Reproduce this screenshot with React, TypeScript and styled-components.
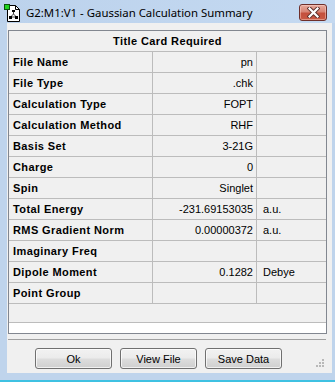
import React from 'react'
import styled, { createGlobalStyle } from 'styled-components'

const GlobalStyle = createGlobalStyle`
  html, body {
    margin: 0;
    padding: 0;
    background: #bfd4ec;
  }
  * {
    box-sizing: border-box;
  }
`

const Window = styled.div`
  width: 335px;
  height: 382px;
  display: flex;
  flex-direction: column;
  background: #bfd4ec;
  overflow: hidden;
  font-family: 'Liberation Sans', Arial, sans-serif;
  border-bottom: 2px solid #3fc1e2;
`

const TitleBar = styled.div`
  height: 23px;
  flex: 0 0 23px;
  display: flex;
  align-items: flex-start;
  padding: 4px 8px 0 4px;
  background: linear-gradient(to right, #bcd2ec, #c4d9f1);
`

const TitleText = styled.span`
  font-family: 'Noto Sans', 'Open Sans', sans-serif;
  font-size: 11.4px;
  line-height: 16px;
  color: #000;
  margin-left: 5px;
  margin-top: 1px;
  flex: 1;
`

const CloseButton = styled.div`
  width: 28px;
  height: 17px;
  border: 1px solid #6e2f2a;
  border-radius: 3px;
  background: linear-gradient(to bottom, #e7a99c 0%, #d88575 45%, #c4503d 55%, #c95a44 100%);
  box-shadow: inset 0 0 0 1px rgba(255, 220, 210, 0.45);
  display: flex;
  align-items: center;
  justify-content: center;
`

const Frame = styled.div`
  flex: 1;
  display: flex;
  padding: 0 3px 7px 7px;
`

const Client = styled.div`
  flex: 1;
  display: flex;
  flex-direction: column;
  background: #f0f0f0;
  padding: 7px 5px 0 1px;
`

const Grid = styled.div`
  border: 1px solid #828790;
  background: #ffffff;
  height: 304px;
  display: flex;
  flex-direction: column;
`

const GridBody = styled.div`
  background: #f0f0f0;
  border-bottom: 1px solid #bcbcbc;
  height: 292px;
`

const HeaderRow = styled.div`
  height: 21px;
  border-bottom: 1px solid #bcbcbc;
  display: flex;
  align-items: center;
  justify-content: center;
  font-weight: bold;
  font-size: 11px;
  letter-spacing: 0.4px;
  color: #000;
`

const Row = styled.div`
  height: 21px;
  display: grid;
  grid-template-columns: 144px 104px 1fr;
  border-bottom: 1px solid #bcbcbc;
  font-size: 11px;
  color: #000;
`

const Cell = styled.div<{ $align?: 'left' | 'right'; $bold?: boolean }>`
  display: flex;
  align-items: center;
  justify-content: ${(p) => (p.$align === 'right' ? 'flex-end' : 'flex-start')};
  padding: ${(p) => (p.$align === 'right' ? '0 3px 0 0' : p.$bold ? '0 0 0 4px' : '0 0 0 6px')};
  font-weight: ${(p) => (p.$bold ? 'bold' : 'normal')};
  letter-spacing: ${(p) => (p.$bold ? '0.4px' : '0')};
  border-right: 1px solid #bcbcbc;
  white-space: nowrap;

  &:last-child {
    border-right: none;
  }
`

const Separator = styled.div`
  margin-top: 5px;
  height: 1px;
  background: #a0a0a0;
  margin-right: 1px;
`

const ButtonRow = styled.div`
  display: flex;
  align-items: flex-start;
  gap: 8px;
  padding-left: 27px;
  margin-top: 8px;
  flex: 1;
`

const Button = styled.button`
  width: 77px;
  height: 21px;
  padding: 0;
  border: 1px solid #707070;
  border-radius: 3px;
  background: linear-gradient(to bottom, #f2f2f2 0%, #ebebeb 48%, #dddddd 52%, #cfcfcf 100%);
  box-shadow: inset 0 0 0 1px rgba(255, 255, 255, 0.7);
  font-family: 'Liberation Sans', Arial, sans-serif;
  font-size: 11px;
  color: #000;
`

const Grip = styled.svg`
  margin-left: auto;
  margin-top: 11px;
  margin-right: 2px;
`

type Item = { label: string; value: string; unit: string }

const rows: Item[] = [
  { label: 'File Name', value: 'pn', unit: '' },
  { label: 'File Type', value: '.chk', unit: '' },
  { label: 'Calculation Type', value: 'FOPT', unit: '' },
  { label: 'Calculation Method', value: 'RHF', unit: '' },
  { label: 'Basis Set', value: '3-21G', unit: '' },
  { label: 'Charge', value: '0', unit: '' },
  { label: 'Spin', value: 'Singlet', unit: '' },
  { label: 'Total Energy', value: '-231.69153035', unit: 'a.u.' },
  { label: 'RMS Gradient Norm', value: '0.00000372', unit: 'a.u.' },
  { label: 'Imaginary Freq', value: '', unit: '' },
  { label: 'Dipole Moment', value: '0.1282', unit: 'Debye' },
  { label: 'Point Group', value: '', unit: '' },
]

const AppIcon = () => (
  <svg width="17" height="18" viewBox="0 0 17 18">
    <path d="M3.5 1.5 H11.5 L15.5 5.5 V17.5 H3.5 Z" fill="#fff" stroke="#000" />
    <path d="M11.5 1.5 V5.5 H15.5" fill="none" stroke="#000" />
    <rect x="0.5" y="0.5" width="5" height="5" fill="#1fd41f" stroke="#0a500a" />
    <path d="M9.5 7 V10 M9.5 10 L6.5 13 M9.5 10 L12.5 13 M6.5 13 H12.5" stroke="#444" fill="none" />
    <rect x="8" y="6" width="3" height="2" fill="#000" />
    <rect x="5" y="12" width="3" height="3" fill="#000" />
    <rect x="11" y="12" width="3" height="3" fill="#000" />
  </svg>
)

const CloseGlyph = () => (
  <svg width="13" height="11" viewBox="0 0 13 11">
    <path d="M2.5 1.5 L10.5 9.5 M10.5 1.5 L2.5 9.5" stroke="#5a2e2a" strokeWidth="4" strokeLinecap="square" />
    <path d="M2.5 1.5 L10.5 9.5 M10.5 1.5 L2.5 9.5" stroke="#ffffff" strokeWidth="2.2" strokeLinecap="square" />
  </svg>
)

const SizeGrip = () => (
  <Grip width="9" height="9" viewBox="0 0 9 9">
    {[
      [6, 0],
      [3, 3],
      [6, 3],
      [0, 6],
      [3, 6],
      [6, 6],
    ].map(([x, y]) => (
      <rect key={`${x}-${y}`} x={x} y={y} width="2" height="2" fill="#b8b8b8" />
    ))}
  </Grip>
)

const App = () => {
  return (
    <>
      <GlobalStyle />
      <Window>
        <TitleBar>
          <AppIcon />
          <TitleText>G2:M1:V1 - Gaussian Calculation Summary</TitleText>
          <CloseButton>
            <CloseGlyph />
          </CloseButton>
        </TitleBar>
        <Frame>
          <Client>
            <Grid>
              <GridBody>
                <HeaderRow>Title Card Required</HeaderRow>
                {rows.map((r) => (
                  <Row key={r.label}>
                    <Cell $bold>{r.label}</Cell>
                    <Cell $align="right">{r.value}</Cell>
                    <Cell>{r.unit}</Cell>
                  </Row>
                ))}
              </GridBody>
            </Grid>
            <Separator />
            <ButtonRow>
              <Button>Ok</Button>
              <Button>View File</Button>
              <Button>Save Data</Button>
              <SizeGrip />
            </ButtonRow>
          </Client>
        </Frame>
      </Window>
    </>
  )
}

export default App
